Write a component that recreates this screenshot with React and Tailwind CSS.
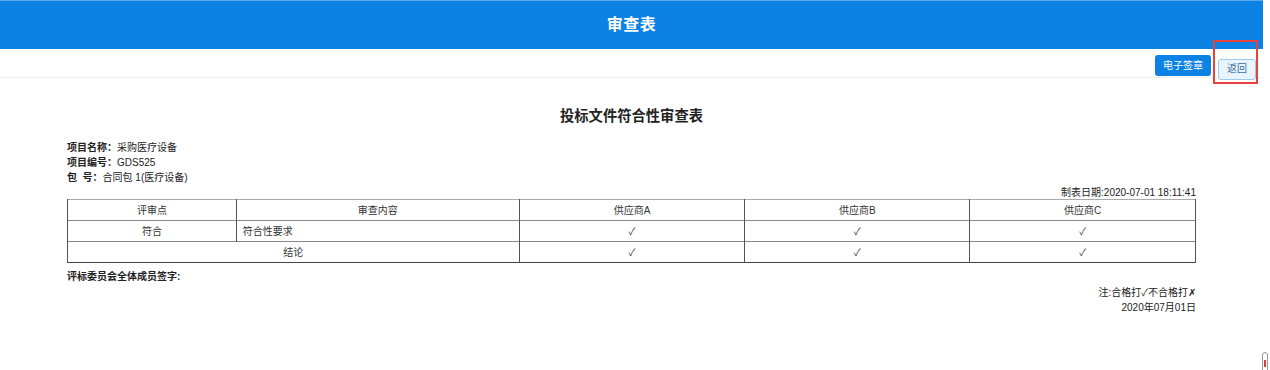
import React from 'react';

const suppliers = ['供应商A', '供应商B', '供应商C'];

const App = () => {
  const cell = 'border-x border-[#555] h-[21px] text-center align-middle';

  return (
    <div
      className="relative w-[1270px] h-[370px] bg-white text-[#333] overflow-hidden"
      style={{ fontFamily: '"Liberation Sans", "Noto Sans CJK SC", sans-serif' }}
    >
      <div className="w-[1263px]">
        {/* HEADER */}
        <header className="h-[49px] bg-[#0c82e4] border-t border-[#5aa6ea] flex items-center justify-center">
          <h1 className="text-white text-[16px] font-bold tracking-[0.5px]">审查表</h1>
        </header>

        {/* TOOLBAR */}
        <div className="h-[29px] border-b border-[#eeeeee] flex items-start justify-end gap-[7px] pr-[7px] pt-[6px]">
          <button className="h-[21px] px-[8px] rounded-[3px] bg-[#0c82e4] text-white text-[10px] leading-none">
            电子签章
          </button>
          <div className="relative">
            <button className="h-[21px] w-[38px] rounded-[3px] bg-[#eaf4fd] border border-[#9ccbf3] text-[#3a6f9f] text-[10px] leading-none">
              返回
            </button>
            <div className="absolute -left-[5px] -right-[2px] -top-[15px] -bottom-[4px] border-2 border-[#e8403b]" />
          </div>
        </div>

        {/* CONTENT */}
        <div className="pl-[67px] pr-[67px] text-[10px]">
          <h2 className="text-center text-[14.3px] font-bold text-[#222] mt-[28px] leading-[20px]">
            投标文件符合性审查表
          </h2>

          <div className="mt-[14px] leading-[15px] text-[#222]">
            <p><span className="font-bold">项目名称：</span>采购医疗设备</p>
            <p><span className="font-bold">项目编号：</span>GDS525</p>
            <p><span className="font-bold">包&nbsp;&nbsp;号：</span>合同包 1(医疗设备)</p>
          </div>

          <p className="text-right leading-[15px] text-[#222]">制表日期:2020-07-01 18:11:41</p>

          <table className="w-full border-collapse mt-[-1px] text-[10px] text-[#333]">
            <colgroup>
              <col className="w-[169px]" />
              <col className="w-[283px]" />
              <col className="w-[226px]" />
              <col className="w-[225px]" />
              <col className="w-[226px]" />
            </colgroup>
            <tbody>
              <tr className="border-t border-[#aaa]">
                <td className={cell}>评审点</td>
                <td className={cell}>审查内容</td>
                {suppliers.map((s) => (
                  <td key={s} className={cell}>{s}</td>
                ))}
              </tr>
              <tr className="border-t border-[#888]">
                <td className={cell}>符合</td>
                <td className={`${cell} text-left pl-[6px]`}>符合性要求</td>
                {suppliers.map((s) => (
                  <td key={s} className={cell}>✓</td>
                ))}
              </tr>
              <tr className="border-y border-t-[#888] border-b-[#444]">
                <td colSpan={2} className={cell}>结论</td>
                {suppliers.map((s) => (
                  <td key={s} className={cell}>✓</td>
                ))}
              </tr>
            </tbody>
          </table>

          <p className="mt-[6px] font-bold text-[#222] leading-[15px]">评标委员会全体成员签字:</p>
          <div className="text-right text-[#222] leading-[15px] mt-[1px]">
            <p>注:合格打✓不合格打✗</p>
            <p>2020年07月01日</p>
          </div>
        </div>
      </div>

      {/* little gauge at the corner */}
      <div className="absolute left-[1262px] top-[352px] w-[6px] h-[22px] rounded-t-[3px] border border-[#999] flex items-end justify-center">
        <div className="w-[2px] h-[7px] bg-[#e53935] mb-[6px]" />
      </div>
    </div>
  );
};

export default App;
